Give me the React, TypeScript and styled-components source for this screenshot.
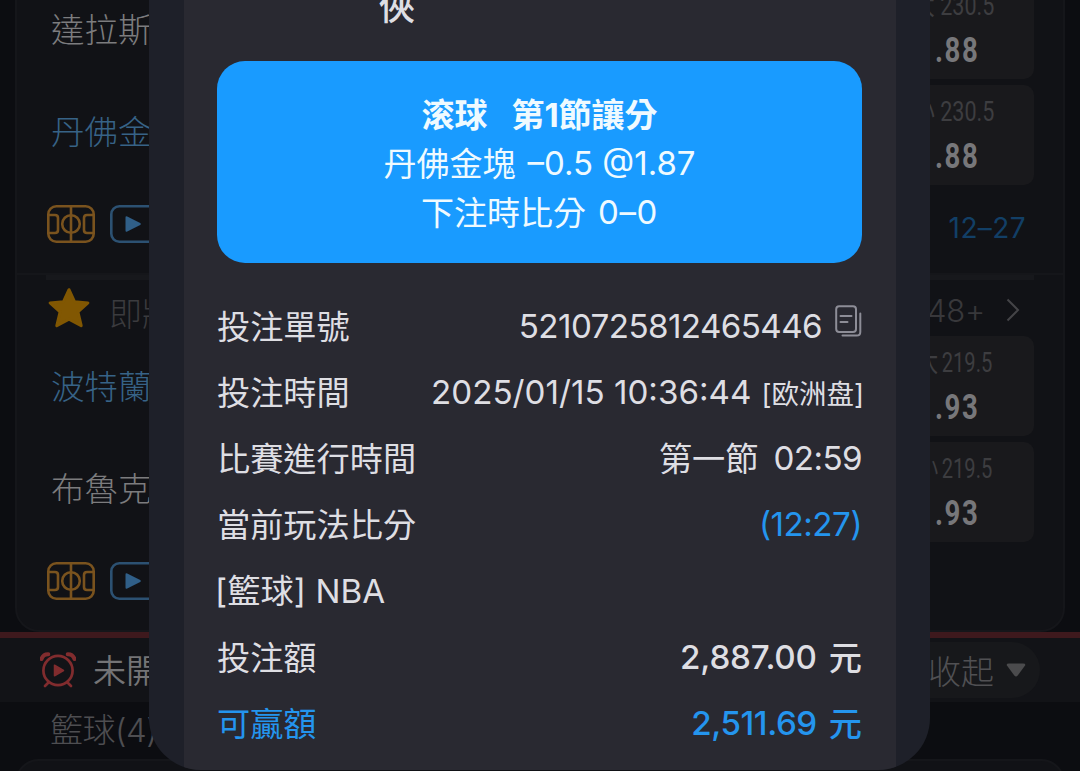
import styled, { createGlobalStyle } from "styled-components";


interface Match {
    live: boolean;
    home: string;
    away: string;
    homeActive: boolean;
    awayActive: boolean;
    line: string;
    odds: string;
    score?: string;
}

const MATCHES: Match[] = [
    { live: true, home: '達拉斯', away: '丹佛金', homeActive: false, awayActive: true, line: '230.5', odds: '1.88', score: '12–27' },
    { live: false, home: '波特蘭', away: '布魯克', homeActive: true, awayActive: false, line: '219.5', odds: '1.93' },
];


function CourtIcon() {
    return (
        <svg width="48" height="38" viewBox="0 0 48 38" fill="none" stroke="#7a531e" strokeWidth="2.6">
            <rect x="1.3" y="1.3" width="45.4" height="35.4" rx="8" />
            <path d="M24 1v36M1.5 10h6.500q3 0 3 3v12q0 3-3 3h-6.500M46.500 10h-6.500q-3 0-3 3v12q0 3 3 3h6.500" />
            <circle cx="24" cy="19" r="8.8" />
        </svg>
    );
}

function LiveIcon() {
    return (
        <svg width="48" height="38" viewBox="0 0 48 38" fill="none">
            <rect x="1.3" y="1.3" width="45.4" height="35.4" rx="8" stroke="#2c5172" strokeWidth="2.6" />
            <path d="M15.500 12.400v13.200q0 1.800 1.700 1l13-6.600q1.500-1 0-2l-13-6.600q-1.700-.8-1.700 1z" fill="#305f88" />
        </svg>
    );
}

function StarIcon() {
    return (
        <svg width="44" height="42" viewBox="0 0 44 42" fill="#815702" stroke="#815702" strokeWidth="3" strokeLinejoin="round">
            <path d="M22 2.700l5.600 12.100 13.300 1.100-10 8.900 3.300 13.900L22 32.100 9.800 38.700l3.300-13.900-10-8.900 13.300-1.100z" />
        </svg>
    );
}

function AlarmIcon() {
    return (
        <svg width="36" height="36" viewBox="0 0 36 36" fill="none" stroke="#812c2e" strokeWidth="2.700" strokeLinecap="round">
            <circle cx="18" cy="18.500" r="14.600" />
            <path d="M8.500 30.500L5 34M27.500 30.500L31 34" />
            <path d="M1.500 7Q3.200 2 8.300 2.200M34.500 7Q32.800 2 27.700 2.200" strokeWidth="4" />
            <path d="M14.500 13.200v10.600l9-5.300z" fill="#812c2e" stroke="#812c2e" strokeWidth="1.500" strokeLinejoin="round" />
        </svg>
    );
}

function CopyIcon() {
    return (
        <svg width="27" height="32" viewBox="0 0 27 32" fill="none" stroke="#8d8d97" strokeWidth="2" strokeLinecap="round">
            <rect x="1.200" y="1.200" width="19.800" height="25.800" rx="3" />
            <path d="M5.500 11h11M5.500 17h7" />
            <path d="M25.300 8.500V27q0 3.600-3.600 3.600H7.500" />
        </svg>
    );
}


export default function App() {
    return (
        <>
            <GlobalStyle />
            <Screen>
                <LeagueCard>
                    {MATCHES.map((match) => (
                        <MatchItem key={match.home} match={match} />
                    ))}
                </LeagueCard>
                <SectionBar>
                    <AlarmIcon />
                    <SectionTitle>未開</SectionTitle>
                    <CollapseButton>
                        收起
                        <svg width="20" height="15" viewBox="0 0 20 15" fill="#4b4b4d">
                            <path d="M3 .5h14q3.500 0 1.700 2.600l-7 9.400q-1.700 2-3.400 0l-7-9.400Q-.5.500 3 .5z" />
                        </svg>
                    </CollapseButton>
                </SectionBar>
                <SportLabel>籃球(4)</SportLabel>
                <NextCard />

                <Dialog>
                    <DialogBody>
                        <DialogTitle>俠</DialogTitle>
                        <BetCard>
                            <BetLine $bold>
                                <span>滚球</span>
                                <span>第1節讓分</span>
                            </BetLine>
                            <BetLine>
                                <span>丹佛金塊</span>
                                <Num $spacing={0}>–0.5 @1.87</Num>
                            </BetLine>
                            <BetLine>
                                <span>下注時比分</span>
                                <Num $spacing={0.7}>0–0</Num>
                            </BetLine>
                        </BetCard>
                        <DetailRow>
                            <span>投注單號</span>
                            <Value>
                                <Num $spacing={-0.6}>5210725812465446</Num>
                                <CopySlot><CopyIcon /></CopySlot>
                            </Value>
                        </DetailRow>
                        <DetailRow>
                            <span>投注時間</span>
                            <Value>
                                <Num $spacing={0}>2025/01/15 10:36:44</Num>
                                <MarketTag>[欧洲盘]</MarketTag>
                            </Value>
                        </DetailRow>
                        <DetailRow>
                            <span>比賽進行時間</span>
                            <Value>
                                <span>第一節</span>
                                <TimeLeft $spacing={-0.6}>02:59</TimeLeft>
                            </Value>
                        </DetailRow>
                        <DetailRow>
                            <span>當前玩法比分</span>
                            <Value $accent><Num $spacing={-0.5}>(12:27)</Num></Value>
                        </DetailRow>
                        <DetailRow>
                            <League $spacing={0.1}>[籃球] NBA</League>
                        </DetailRow>
                        <DetailRow>
                            <span>投注額</span>
                            <Value $strong>
                                <Num $spacing={-0.2}>2,887.00</Num>
                                <Unit>元</Unit>
                            </Value>
                        </DetailRow>
                        <DetailRow $accent>
                            <span>可贏額</span>
                            <Value $strong $accent>
                                <Num $spacing={-0.45}>2,511.69</Num>
                                <Unit>元</Unit>
                            </Value>
                        </DetailRow>
                    </DialogBody>
                </Dialog>
            </Screen>
        </>
    );
}

function MatchItem({ match }: { match: Match }) {
    return (
        <MatchWrapper>
            {!match.live && (
                <MatchHeader>
                    <StarIcon />
                    <StartLabel>即將</StartLabel>
                    <MarketCount>
                        48+
                        <svg width="14" height="24" viewBox="0 0 14 24" fill="none" stroke="#444447" strokeWidth="2">
                            <path d="M1.500 1.500L12 12 1.500 22.500" />
                        </svg>
                    </MarketCount>
                </MatchHeader>
            )}
            <MatchBody>
                <Teams>
                    <Team $active={match.homeActive}>{match.home}</Team>
                    <Team $active={match.awayActive}>{match.away}</Team>
                </Teams>
                <OddsColumn>
                    {['大', '小'].map((side) => (
                        <OddsBox key={side}>
                            <OddsLine $inset={match.live ? 40 : 42}><small>{side}</small>{match.line}</OddsLine>
                            <OddsValue>{match.odds}</OddsValue>
                        </OddsBox>
                    ))}
                </OddsColumn>
            </MatchBody>
            <MatchFooter>
                <CourtIcon />
                <LiveIcon />
                {match.score && <Score>{match.score}</Score>}
            </MatchFooter>
        </MatchWrapper>
    );
}

const GlobalStyle = createGlobalStyle`
    * {
        box-sizing: border-box;
    }
    body {
        margin: 0;
        background-color: #0c0d11;
        font-family: Inter, "Noto Sans CJK TC", sans-serif;
    }
    svg {
        display: block;
        flex-shrink: 0;
    }
`;

const Screen = styled.div`
    position: relative;
    display: flex;
    flex-direction: column;
    width: 1080px;
    height: 771px;
    overflow: hidden;
    background-color: #0c0d11;
`;

const LeagueCard = styled.div`
    flex-shrink: 0;
    height: 653px;
    margin: -21px 15px 0;
    border: 2px solid #15161a;
    border-top: none;
    border-radius: 0 0 24px 24px;
    background-color: #111216;
`;

const MatchWrapper = styled.div`
    & + & {
        margin-top: 10px;
        border-top: 2px solid #15161a;
    }
`;

const MatchHeader = styled.div`
    display: flex;
    align-items: center;
    height: 61px;
    margin: 0 29px;
    padding: 0 14px 0 1px;
    border-top: 5px solid #17181c;
`;

const StartLabel = styled.div`
    margin: 7px 0 0 18px;
    font-size: 33px;
    font-weight: 300;
    color: #3b3b3e;
`;

const MarketCount = styled.div`
    display: flex;
    align-items: center;
    gap: 21px;
    margin: 4px 0 0 auto;
    font-size: 31px;
    font-weight: 300;
    letter-spacing: -0.2px;
    color: #38383b;
`;

const MatchBody = styled.div`
    display: flex;
    justify-content: space-between;
    height: 206px;
    margin: 0 29px;
`;

const Teams = styled.div`
    display: flex;
    flex-direction: column;
    padding-left: 5px;
`;

const Team = styled.div<{ $active: boolean }>`
    height: 102px;
    line-height: 102px;
    font-size: 33.500px;
    font-weight: 300;
    color: ${({ $active }) => ($active ? '#376387' : '#7c7c7e')};
`;

const OddsColumn = styled.div`
    display: flex;
    flex-direction: column;
    gap: 6px;
`;

const OddsBox = styled.div`
    display: flex;
    flex-direction: column;
    align-items: flex-end;
    width: 170px;
    height: 100px;
    padding-top: 9px;
    border-radius: 10px;
    background-color: #19191c;
    font-family: Roboto, "Noto Sans CJK TC", sans-serif;
`;

const OddsLine = styled.div<{ $inset: number }>`
    display: flex;
    align-items: center;
    gap: 7px;
    margin-right: ${({ $inset }) => $inset}px;
    line-height: 36px;
    font-size: 28px;
    color: #3d3d40;
    transform: scaleX(${({ $inset }) => ($inset > 40 ? 0.72 : 0.77)});
    transform-origin: right;

    small {
        margin-right: ${({ $inset }) => ($inset > 40 ? -2 : 0)}px;
        font-size: 28px;
    }
`;

const OddsValue = styled.div`
    margin-right: 55px;
    padding-top: 4px;
    line-height: 44px;
    font-size: 34.500px;
    font-weight: 700;
    letter-spacing: 2px;
    color: #77777a;
    transform: scaleX(0.800);
    transform-origin: right;
`;

const MatchFooter = styled.div`
    display: flex;
    align-items: center;
    gap: 15px;
    height: 78px;
    padding: 0 37px 0 30px;
`;

const Score = styled.div`
    margin: 7px 0 0 auto;
    font-size: 28px;
    letter-spacing: 0.4px;
    color: #123f66;
`;

const SectionBar = styled.div`
    display: flex;
    flex-shrink: 0;
    align-items: center;
    height: 70px;
    padding: 0 40px;
    border-top: 6px solid #3e191d;
    background-color: #121317;
`;

const SectionTitle = styled.div`
    margin: 0 0 3px 17px;
    font-size: 33px;
    font-weight: 350;
    color: #747476;
`;

const CollapseButton = styled.div`
    display: flex;
    align-items: center;
    gap: 12px;
    height: 56px;
    margin-left: auto;
    padding: 0 14px 0 60px;
    border-radius: 28px;
    background-color: #17181b;
    font-size: 33px;
    font-weight: 300;
    color: #505053;
`;

const SportLabel = styled.div`
    flex-shrink: 0;
    height: 57px;
    padding-left: 50px;
    line-height: 57px;
    font-size: 33px;
    font-weight: 300;
    letter-spacing: -0.5px;
    color: #4e4e51;
`;

const NextCard = styled.div`
    flex-shrink: 0;
    height: 60px;
    margin: 0 15px;
    border: 2px solid #15161a;
    border-radius: 24px;
    background-color: #111216;
`;

// lies over the match list
const Dialog = styled.div`
    position: absolute;
    top: 0;
    left: 149px;
    width: 781px;
    height: 770px;
    padding: 0 34px 0 35px;
    overflow: hidden;
    border-radius: 0 0 52px 52px;
    background-color: #1e2029;
`;

const DialogBody = styled.div`
    display: flex;
    flex-direction: column;
    height: 100%;
    padding: 0 34px 0 33px;
    background-color: #292931;
    font-size: 33.200px;
    color: #dedee3;
`;

const DialogTitle = styled.div`
    flex-shrink: 0;
    height: 61px;
    margin-top: -17px;
    margin-bottom: 17px;
    padding-left: 162px;
    line-height: 48px;
    font-size: 36px;
    font-weight: 500;
`;

const BetCard = styled.div`
    flex-shrink: 0;
    height: 202px;
    margin-bottom: 30px;
    padding-top: 30px;
    border-radius: 28px;
    background-color: #199bff;
    color: #effaff;
`;

const BetLine = styled.div<{ $bold?: boolean }>`
    display: flex;
    justify-content: center;
    gap: ${({ $bold }) => ($bold ? '24px' : '12px')};
    height: 49px;
    line-height: 49px;
    font-size: 33px;
    font-weight: ${({ $bold }) => ($bold ? 700 : 400)};
    white-space: nowrap;
`;

const DetailRow = styled.div<{ $accent?: boolean }>`
    display: flex;
    flex-shrink: 0;
    align-items: center;
    justify-content: space-between;
    height: 66.200px;
    padding-top: 1px;
    line-height: 48px;
    white-space: nowrap;
    color: ${({ $accent }) => ($accent ? '#2495ee' : 'inherit')};
`;

const Value = styled.div<{ $accent?: boolean; $strong?: boolean }>`
    display: flex;
    align-items: center;
    font-weight: ${({ $strong }) => ($strong ? 500 : 400)};
    color: ${({ $accent }) => ($accent ? '#2495ee' : 'inherit')};
`;

const Num = styled.span<{ $spacing: number }>`
    margin-top: -1px;
    margin-bottom: 1px;
    letter-spacing: ${({ $spacing }) => $spacing}px;
`;

const League = styled(Num)`
    margin: 0 0 0 -2px;
`;

const TimeLeft = styled(Num)`
    margin-left: 15px;
`;

const CopySlot = styled.span`
    margin: 0 0 11px 13px;
`;

const MarketTag = styled.span`
    margin-left: 10px;
    margin-right: -2px;
    padding-top: 3px;
    font-family: Inter, "Noto Sans CJK SC", sans-serif;
    font-size: 27.500px;
`;

const Unit = styled.span`
    margin-left: 12px;
`;
